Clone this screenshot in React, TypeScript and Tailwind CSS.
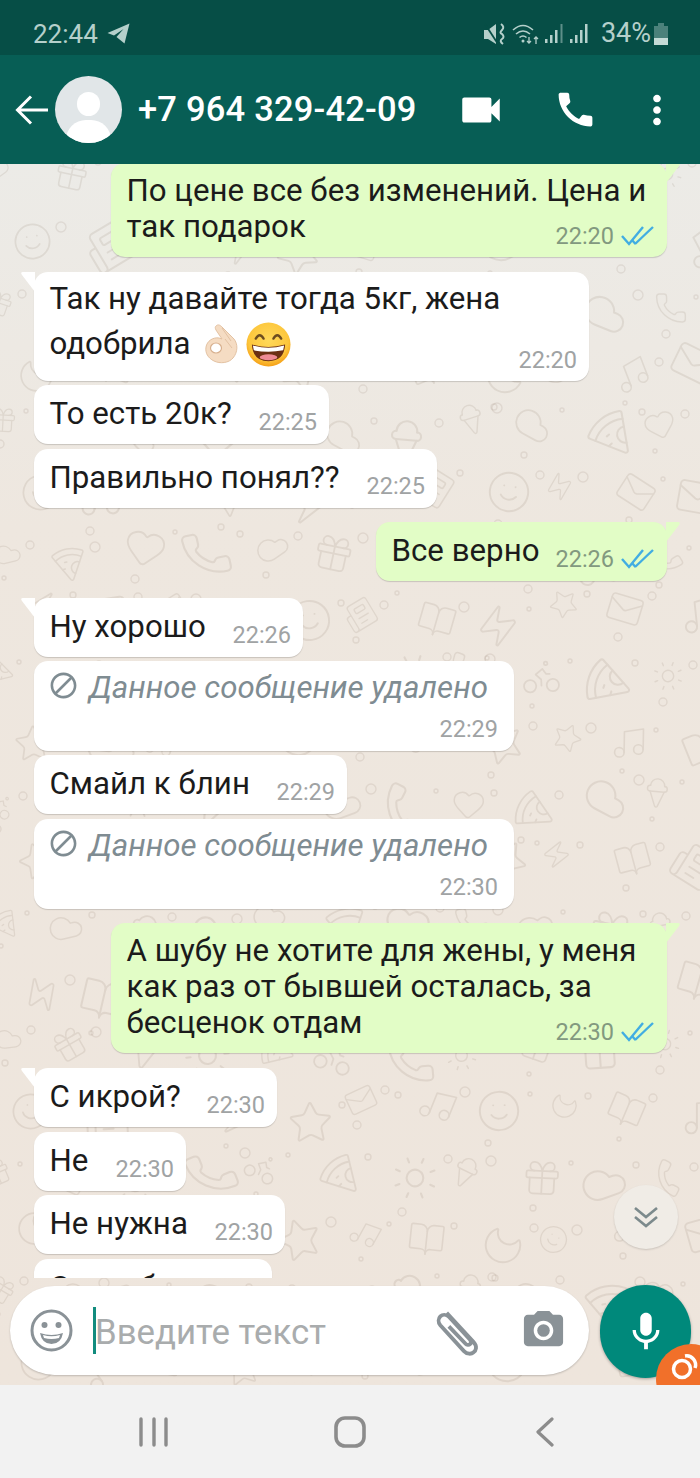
import type { ReactNode } from 'react';
import {
  Apple, Bell, Bike, BookOpen, Camera, Cat, Cloud, Coffee, Crown, Gift, Heart, IceCream, Key, Leaf, Lightbulb,
  Mail, Moon, Music, Newspaper, Paperclip, Phone, Pizza, Smile, Star, Sun, Umbrella, Watch, Zap,
} from 'lucide-react';
import { MdBlock, MdCall, MdMic, MdMoreVert, MdPhotoCamera, MdVideocam } from 'react-icons/md';

const doodles = [
  Cloud, Star, Heart, Camera, Coffee, Smile, Leaf, Music, Gift, Moon, Bell, Umbrella, Pizza, Key, Sun, Mail,
  Bike, Apple, Watch, BookOpen, Crown, Zap, IceCream, Newspaper, Cat, Lightbulb, Phone, Paperclip,
];

function Wallpaper() {
  const items: ReactNode[] = [];
  let n = 0;
  for (let row = 0; row < 20; row++) {
    for (let col = 0; col < 11; col++) {
      const Icon = doodles[(n * n * 3 + n * 5 + row * 7) % doodles.length];
      const x = col * 66 + (row % 2) * 30 - 20 + ((n * 37) % 15);
      const y = row * 62 - 10 + ((n * 53) % 17);
      const size = 30 + ((n * 29) % 22);
      const angle = ((n * 47) % 70) - 35;
      items.push(
        <g key={n} transform={`rotate(${angle} ${x + size / 2} ${y + size / 2})`}>
          <Icon x={x} y={y} width={size} height={size} strokeWidth={1} color="#78644f" opacity={0.12} />
        </g>,
      );
      items.push(<circle key={`a${n}`} cx={x + size + 8} cy={y + 6} r={2 + (n % 4)} fill="none" stroke="#78644f" strokeOpacity={0.12} strokeWidth={1.4} />);
      if (n % 2 === 0) {
        items.push(<circle key={`b${n}`} cx={x + 12} cy={y + size + 9} r={2 + (n % 3)} fill="none" stroke="#78644f" strokeOpacity={0.12} strokeWidth={1.4} />);
      }
      n++;
    }
  }
  return (
    <svg className="absolute inset-0 h-full w-full" viewBox="0 0 700 1221" preserveAspectRatio="none">
      {items}
    </svg>
  );
}

function Ticks() {
  return (
    <svg width="33" height="20" viewBox="0 0 33 20" fill="none" stroke="#42ade2" strokeWidth="2.400" className="ml-[7px] shrink-0">
      <path d="M1 10l7 8L22 1" />
      <path d="M14 18L32 1" />
      <path d="M11 14l3.500 4" />
    </svg>
  );
}

function OkHand() {
  return (
    <svg width="34" height="40" viewBox="0 0 34 40">
      <path d="M11 2C13 0 15 1 17 3L29 15C33 20 33 28 28 34C24 39 15 40 9 37C3 34 0 29 1 23C2 17 8 13 14 14L17 15L11 6C10 4 10 3 11 2z" fill="#f5dcc3" stroke="#e3c2a3" strokeWidth="1" />
      <ellipse cx="11" cy="24" rx="5.500" ry="5" fill="#fff" stroke="#d8b08e" strokeWidth="1.200" />
      <path d="M17 4l9 13M20 15l7 9" fill="none" stroke="#e3c2a3" strokeWidth="1" />
    </svg>
  );
}

function Grin() {
  return (
    <svg width="45" height="45" viewBox="0 0 46 46">
      <defs>
        <radialGradient id="grin-face" cx="50%" cy="40%" r="60%">
          <stop offset="0%" stopColor="#ffd95a" />
          <stop offset="75%" stopColor="#fdc63c" />
          <stop offset="100%" stopColor="#f59f16" />
        </radialGradient>
      </defs>
      <circle cx="23" cy="23" r="22.500" fill="url(#grin-face)" />
      <path d="M10 17q4-7 8 0M28 17q4-7 8 0" fill="none" stroke="#6d4c1f" strokeWidth="2.400" strokeLinecap="round" />
      <path d="M6 23q17 5 34 0q-1 17-17 17T6 23z" fill="#6b2f12" />
      <path d="M7 24q16 4.500 32 0l-1 5q-15 3-30 0z" fill="#fff" />
      <ellipse cx="23" cy="36" rx="9" ry="3" fill="#ee8a94" />
    </svg>
  );
}

interface BubbleProps {
  out?: boolean;
  tail?: boolean;
  time: string;
  width: string;
  mt?: string;
  children: ReactNode;
  stacked?: boolean;
}

function Bubble({ out, tail, time, width, mt, children, stacked }: BubbleProps) {
  return (
    <div className={`relative shrink-0 rounded-[14px] shadow-[0_1px_1px_rgba(0,0,0,0.16)] ${out ? 'self-end mr-[33px] bg-[#e2fdc6]' : 'self-start ml-[34px] bg-white'} ${width} ${mt ?? 'mt-[4px]'}`}>
      {tail && !out && (
        <svg width="16" height="20" viewBox="0 0 16 20" className="absolute left-[-14px] top-0">
          <path d="M15 0H3Q0 0 2 3l13 17z" fill="#fff" />
        </svg>
      )}
      {tail && out && (
        <svg width="16" height="20" viewBox="0 0 16 20" className="absolute right-[-14px] top-0">
          <path d="M1 0h12q3 0 1 3L1 20z" fill="#e2fdc6" />
        </svg>
      )}
      <div className={`pl-[15.5px] ${out ? 'pr-[13px]' : 'pr-[12px]'} ${stacked ? 'flex flex-col pt-[10px] pb-[6px]' : 'flex items-start justify-between pt-[11px] pb-[7px]'}`}>
        <div className="whitespace-nowrap text-[31.25px] leading-[36px] text-[#1b1b1b]">{children}</div>
        <div className={`flex items-center ${stacked ? 'self-end mt-[-24px]' : 'mt-[11px]'}`}>
          <span className={`text-[23.5px] leading-[30px] ${out ? 'text-[#82997f]' : 'text-[#a0a3a4]'}`}>{time}</span>
          {out && <Ticks />}
        </div>
      </div>
    </div>
  );
}

function Deleted({ time, mt }: { time: string; mt: string }) {
  return (
    <div className={`ml-[34px] h-[90px] w-[480px] shrink-0 self-start rounded-[14px] bg-white pl-[16px] pr-[16px] pt-[9px] shadow-[0_1px_1px_rgba(0,0,0,0.16)] ${mt}`}>
      <div className="flex items-center text-[#7f8c92]">
        <MdBlock size={31} className="ml-[-2px] mr-[10px] mt-[-5px]" />
        <span className="whitespace-nowrap text-[31.25px] leading-[36px] italic">Данное сообщение удалено</span>
      </div>
      <div className="mt-[8px] text-right text-[23.5px] leading-[30px] text-[#a0a3a4]">{time}</div>
    </div>
  );
}

function StatusBar() {
  return (
    <div className="flex h-[55px] shrink-0 items-center justify-between bg-[#064e46] pl-[33px] pr-[32px] pt-[12px] text-[#b5d0cb]">
      <div className="flex items-center gap-[9px]">
        <span className="text-[26px] leading-none">22:44</span>
        <svg width="23" height="21" viewBox="0 0 23 21" fill="currentColor">
          <path d="M22.500 0.500L0.500 10l6.500 2.500 9.500-6.500-7 8v0l8 6.500z" />
        </svg>
      </div>
      <div className="flex items-center">
        <svg width="22" height="22" viewBox="0 0 22 22" fill="none" className="mr-[6px]">
          <path d="M0 7h4l8-6v20l-8-5H0z" fill="currentColor" />
          <path d="M1 1l13 20" stroke="#064e46" strokeWidth="1.800" />
          <path d="M17 1q4 3 1 6t0 4q3 3 0 5t1 5" stroke="currentColor" strokeWidth="2" />
        </svg>
        <svg width="27" height="22" viewBox="0 0 27 22" fill="none" stroke="currentColor" strokeWidth="1.600" className="mr-[6px]">
          <path d="M1 7q10-9 20 0M4 11q7-6 14 0M7.500 14.500q3.500-3 7 0" />
          <circle cx="11" cy="18" r="1.500" fill="currentColor" stroke="none" />
          <path d="M17 14v6M24 21v-7M22 16l2-2 2 2M15 18l2 2 2-2" strokeWidth="1.300" />
        </svg>
        <svg width="18" height="20" viewBox="0 0 18 20" fill="currentColor" className="mr-[7px]">
          <rect x="0" y="15" width="2.500" height="4" />
          <rect x="5" y="11" width="2.500" height="8" />
          <rect x="10" y="6" width="2.500" height="13" />
          <rect x="15.500" y="0" width="2" height="19" opacity="0.5" />
        </svg>
        <svg width="18" height="20" viewBox="0 0 18 20" fill="currentColor" className="mr-[13px]">
          <rect x="0" y="15" width="2.500" height="4" />
          <rect x="5" y="11" width="2.500" height="8" />
          <rect x="10" y="6" width="2.500" height="13" />
          <rect x="15" y="0" width="2.500" height="19" />
        </svg>
        <span className="text-[27px] leading-none">34%</span>
        <svg width="14" height="22" viewBox="0 0 14 22" className="ml-[3px]">
          <path d="M4 0h6v3h4v19H0V3h4z" fill="#b5d0cb" opacity="0.4" />
          <rect x="0" y="15" width="14" height="7" fill="#c4dad6" />
        </svg>
      </div>
    </div>
  );
}

function Header() {
  return (
    <div className="flex h-[109px] shrink-0 items-center bg-[#075e55] text-white">
      <svg width="34" height="30" viewBox="0 0 34 30" fill="none" stroke="currentColor" strokeWidth="3" className="ml-[15px] shrink-0">
        <path d="M33 15H3M16 1.500L2.500 15 16 28.500" />
      </svg>
      <div className="relative ml-[6px] h-[67px] w-[67px] shrink-0 overflow-hidden rounded-full bg-[#e1e6e8]">
        <div className="absolute left-[22px] top-[16px] h-[24px] w-[23px] rounded-full bg-white" />
        <div className="absolute left-[11px] top-[44px] h-[40px] w-[45px] rounded-full bg-white" />
      </div>
      <span className="ml-[16px] text-[34.5px] font-medium leading-none tracking-[0.2px] whitespace-nowrap">+7 964 329-42-09</span>
      <MdVideocam size={50} className="ml-[39px] shrink-0" />
      <MdCall size={45} className="ml-[47px] shrink-0" />
      <MdMoreVert size={46} className="ml-[36px] shrink-0" />
    </div>
  );
}

function MessageList() {
  return (
    <div className="relative flex h-[1114px] flex-col overflow-hidden">
      <Bubble out tail time="22:20" width="w-[556px]" mt="mt-[-1px]" stacked>
        По цене все без изменений. Цена и<br />так подарок
      </Bubble>
      <div className="relative mt-[15px] ml-[34px] h-[109px] w-[555px] shrink-0 self-start rounded-[14px] bg-white pl-[15.5px] pt-[9px] shadow-[0_1px_1px_rgba(0,0,0,0.16)]">
        <svg width="16" height="20" viewBox="0 0 16 20" className="absolute left-[-14px] top-0">
          <path d="M15 0H3Q0 0 2 3l13 17z" fill="#fff" />
        </svg>
        <div className="text-[31.25px] leading-[36px] text-[#1b1b1b]">Так ну давайте тогда 5кг, жена</div>
        <div className="mt-[4px] flex items-center text-[31.25px] leading-[46px] text-[#1b1b1b]">
          <span>одобрила</span>
          <span className="ml-[14px] flex items-center gap-[7px]">
            <OkHand />
            <Grin />
          </span>
        </div>
        <div className="absolute bottom-[6px] right-[12px] text-[23.5px] leading-[30px] text-[#a0a3a4]">22:20</div>
      </div>
      <Bubble time="22:25" width="w-[295px]">То есть 20к?</Bubble>
      <Bubble time="22:25" width="w-[403px]" mt="mt-[5px]">Правильно понял??</Bubble>
      <Bubble out tail time="22:26" width="w-[291px]" mt="mt-[14px]">Все верно</Bubble>
      <Bubble tail time="22:26" width="w-[269px]" mt="mt-[17px]">Ну хорошо</Bubble>
      <Deleted time="22:29" mt="mt-[4px]" />
      <Bubble time="22:29" width="w-[313px]">Смайл к блин</Bubble>
      <Deleted time="22:30" mt="mt-[5px]" />
      <Bubble out tail time="22:30" width="w-[556px]" mt="mt-[14px]" stacked>
        А шубу не хотите для жены, у меня<br />как раз от бывшей осталась, за<br />бесценок отдам
      </Bubble>
      <Bubble tail time="22:30" width="w-[243px]" mt="mt-[15px]">С икрой?</Bubble>
      <Bubble time="22:30" width="w-[152px]" mt="mt-[5px]">Не</Bubble>
      <Bubble time="22:30" width="w-[251px]">Не нужна</Bubble>
      <Bubble time="22:30" width="w-[238px]" mt="mt-[5px]">Спасибо</Bubble>
    </div>
  );
}

function InputBar() {
  return (
    <div className="relative mt-[8px] flex items-start pl-[10px]">
      <div className="flex h-[89px] w-[579px] shrink-0 items-center rounded-full bg-white pl-[20px] shadow-[0_1px_2px_rgba(0,0,0,0.2)]">
        <svg width="43" height="43" viewBox="0 0 43 43" fill="none" className="shrink-0">
          <circle cx="21.500" cy="21.500" r="19.500" stroke="#8a9297" strokeWidth="3" />
          <circle cx="14.500" cy="16" r="3" fill="#8a9297" />
          <circle cx="28.500" cy="16" r="3" fill="#8a9297" />
          <path d="M10 24q11.500 4 23 0q-2 11-11.500 11T10 24z" fill="#8a9297" />
          <path d="M13 26q8.500 2.500 17 0l-1 3q-7.500 2-15 0z" fill="#fff" />
        </svg>
        <div className="ml-[20px] h-[47px] w-[3px] shrink-0 bg-[#128c7e]" />
        <span className="ml-[-1px] mt-[4px] w-[332px] shrink-0 whitespace-nowrap text-[34.8px] leading-none text-[#a9acad]">Введите текст</span>
        <svg width="54" height="54" viewBox="0 0 24 24" fill="none" stroke="#8a9297" strokeWidth="1.700" className="ml-[5px] mt-[2px] shrink-0">
          <path d="M6.500 3.500l12 13c1.800 2 1 3.800 0 4.500-1 .9-2.900 1-4.300-.5L3.700 9C2.600 7.700 2.800 6 3.700 5.100s2.600-1.100 3.900.2l9.200 10c.8.9.600 1.600.1 2.100s-1.400.5-2-.2L7.500 9.500" />
        </svg>
        <MdPhotoCamera size={47} color="#8a9297" className="ml-[34px] shrink-0" />
      </div>
      <div className="ml-[11px] mt-[-1px] flex h-[93px] w-[91px] shrink-0 items-center justify-center rounded-full bg-[#00897b] shadow-[0_1px_3px_rgba(0,0,0,0.3)]">
        <MdMic size={46} color="#fff" />
      </div>
      <div className="absolute left-[656px] top-[58px] flex h-[70px] w-[70px] rounded-full bg-[#f1702a]">
        <svg width="36" height="36" viewBox="0 0 36 36" fill="none" stroke="#fff" strokeWidth="3.500" className="ml-[11px] mt-[7px]">
          <circle cx="15" cy="18" r="8.500" />
          <path d="M18 5a9 9 0 0 1 10 12" />
        </svg>
      </div>
    </div>
  );
}

function NavBar() {
  return (
    <div className="flex h-[93px] shrink-0 items-center bg-[#f2f2f2] text-[#8c8c8c]">
      <svg width="30" height="30" viewBox="0 0 30 30" fill="none" stroke="currentColor" strokeWidth="3.400" strokeLinecap="round" className="ml-[139px]">
        <path d="M2 2v26M15 2v26M27 2v26" />
      </svg>
      <svg width="32" height="32" viewBox="0 0 32 32" fill="none" stroke="currentColor" strokeWidth="3.600" className="ml-[165px]">
        <rect x="2" y="2" width="28" height="28" rx="9" />
      </svg>
      <svg width="20" height="30" viewBox="0 0 20 30" fill="none" stroke="currentColor" strokeWidth="3.200" strokeLinecap="round" strokeLinejoin="round" className="ml-[169px]">
        <path d="M17 2L3 15l14 13" />
      </svg>
    </div>
  );
}

export default function App() {
  return (
    <div className='flex h-[1478px] w-[700px] flex-col overflow-hidden font-["Roboto",sans-serif]'>
      <StatusBar />
      <Header />
      <div className="relative h-[1221px] shrink-0 overflow-hidden bg-gradient-to-b from-[#ecebe7] via-[#eee7df] via-30% to-[#eee5dc]">
        <Wallpaper />
        <MessageList />
        <div className="absolute left-[614px] top-[1021px] flex h-[64px] w-[64px] items-center justify-center rounded-full bg-[#f0ece6] shadow-[0_1px_2px_rgba(0,0,0,0.15)]">
          <svg width="26" height="26" viewBox="0 0 26 26" fill="none" stroke="#7c8a8c" strokeWidth="2.600">
            <path d="M2 4l11 9 11-9M2 13l11 9 11-9" />
          </svg>
        </div>
        <InputBar />
      </div>
      <NavBar />
    </div>
  );
}
